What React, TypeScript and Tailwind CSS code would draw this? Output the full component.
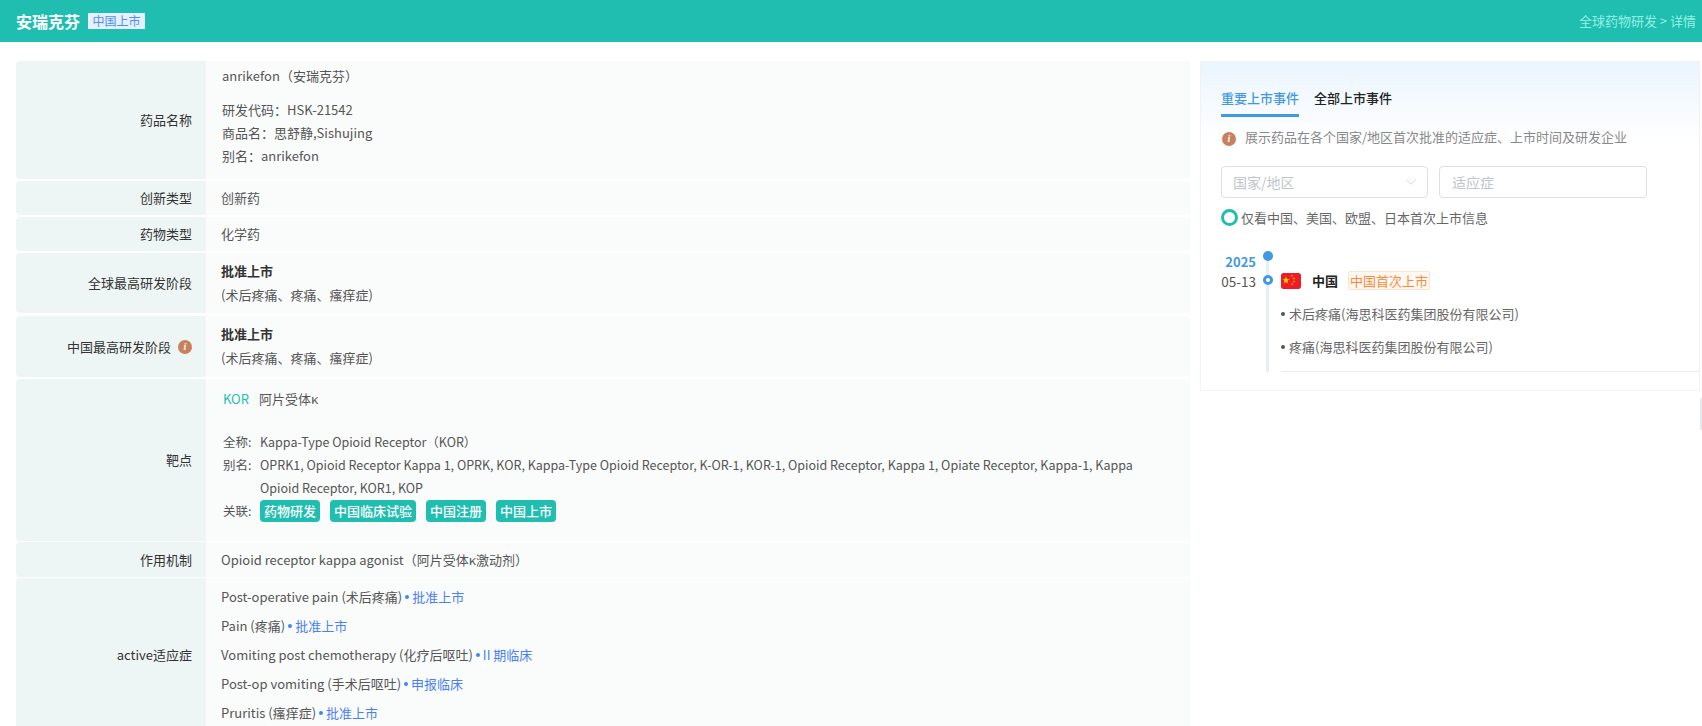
import React from "react";
import { ChevronDown } from "lucide-react";

const font = "[font-family:'Noto_Sans_CJK_SC','Noto_Sans',sans-serif]";

function Info() {
  return (
    <span className="inline-flex h-[14px] w-[14px] shrink-0 items-center justify-center rounded-full bg-[#c9805c] text-[10px] font-bold italic leading-none text-white [font-family:'Liberation_Serif',serif]">
      i
    </span>
  );
}

function Row({
  label,
  labelExtra,
  mb = "mb-[2px]",
  children,
}: {
  label: string;
  labelExtra?: React.ReactNode;
  mb?: string;
  children: React.ReactNode;
}) {
  return (
    <div className={`flex ${mb}`}>
      <div className="flex w-[190px] shrink-0 items-center justify-end gap-[7px] rounded-l-[4px] bg-[#eef6f5] pr-[14px] text-[#333]">
        <span>{label}</span>
        {labelExtra}
      </div>
      <div className="ml-px flex min-w-0 flex-1 flex-col bg-[#fafcfb] text-[#555]">{children}</div>
    </div>
  );
}

function Stage({ h }: { h: string }) {
  return (
    <div className={`flex ${h} flex-col justify-center gap-[3px] pb-[2px] pl-[14px] leading-[21px]`}>
      <div className="font-bold text-[#333]">批准上市</div>
      <div>(术后疼痛、疼痛、瘙痒症)</div>
    </div>
  );
}

const indications: [string, string][] = [
  ["Post-operative pain (术后疼痛)", "批准上市"],
  ["Pain (疼痛)", "批准上市"],
  ["Vomiting post chemotherapy (化疗后呕吐)", "II 期临床"],
  ["Post-op vomiting (手术后呕吐)", "申报临床"],
  ["Pruritis (瘙痒症)", "批准上市"],
];

function Flag() {
  return (
    <svg viewBox="0 0 20 16" className="h-4 w-5 shrink-0 rounded-[2px]">
      <rect width="20" height="16" rx="2" fill="#ee1c25" />
      <polygon points="5,3.5 5.9,6.2 8.6,6.2 6.4,7.8 7.2,10.5 5,8.9 2.8,10.5 3.6,7.8 1.4,6.2 4.1,6.2" fill="#ffde00" />
      <circle cx="11" cy="3" r="0.8" fill="#ffde00" />
      <circle cx="13" cy="5.5" r="0.8" fill="#ffde00" />
      <circle cx="13" cy="8.5" r="0.8" fill="#ffde00" />
      <circle cx="11" cy="11" r="0.8" fill="#ffde00" />
    </svg>
  );
}

export default function App() {
  return (
    <div className={`relative h-[726px] overflow-hidden bg-white text-[13px] ${font}`}>
      <header className="flex h-[42px] items-center justify-between bg-[#1fbeb0] pl-4 pr-[6px]">
        <div className="flex items-center gap-2">
          <span className="text-base font-bold text-white">安瑞克芬</span>
          <span className="flex h-4 w-[57px] items-center justify-center bg-[#e6f0ff] text-xs text-[#4a90f5]">中国上市</span>
        </div>
        <span className="text-[#95f0e4]">全球药物研发 &gt; 详情</span>
      </header>

      <main className="flex items-start pl-4 pt-[19px]">
        <div className="w-[1174px] shrink-0">
          <Row label="药品名称">
            <div className="mb-[2px] flex h-[30px] items-center pl-[15px]">anrikefon（安瑞克芬）</div>
            <div className="flex h-[86px] flex-col pl-[15px] pt-[5px] leading-[23px]">
              <div>研发代码：HSK-21542</div>
              <div>商品名：思舒静,Sishujing</div>
              <div>别名：anrikefon</div>
            </div>
          </Row>
          <Row label="创新类型">
            <div className="flex h-[34px] items-center pl-[14px]">创新药</div>
          </Row>
          <Row label="药物类型">
            <div className="flex h-[34px] items-center pl-[14px]">化学药</div>
          </Row>
          <Row label="全球最高研发阶段" mb="mb-[3px]">
            <Stage h="h-[60px]" />
          </Row>
          <Row label="中国最高研发阶段" labelExtra={<Info />}>
            <Stage h="h-[61px]" />
          </Row>
          <Row label="靶点" mb="mb-px">
            <div className="mb-[2px] flex h-[36px] items-center gap-[10px] pl-[16px] pt-[3px]">
              <span className="text-[#1fbeb0]">KOR</span>
              <span>阿片受体κ</span>
            </div>
            <div className="flex h-[124px] flex-col pl-[16px] pt-[12px] text-[12.5px] leading-[23px]">
              <div className="flex h-[24px] items-end gap-[7px]">
                <span className="w-[30px] shrink-0">全称:</span>
                <span>Kappa-Type Opioid Receptor（KOR）</span>
              </div>
              <div className="flex gap-[7px]">
                <span className="w-[30px] shrink-0">别名:</span>
                <span className="w-[880px]">
                  OPRK1, Opioid Receptor Kappa 1, OPRK, KOR, Kappa-Type Opioid Receptor, K-OR-1, KOR-1, Opioid Receptor, Kappa 1, Opiate Receptor, Kappa-1, Kappa Opioid Receptor, KOR1, KOP
                </span>
              </div>
              <div className="flex items-center gap-[7px]">
                <span className="w-[30px] shrink-0">关联:</span>
                <div className="flex gap-[10px]">
                  {["药物研发", "中国临床试验", "中国注册", "中国上市"].map((t) => (
                    <span key={t} className="flex h-[22px] items-center rounded-[4px] bg-[#1fbeb0] px-[4px] text-[13px] font-medium text-white">
                      {t}
                    </span>
                  ))}
                </div>
              </div>
            </div>
          </Row>
          <Row label="作用机制" mb="mb-px">
            <div className="flex h-[35px] items-center pl-[14px]">Opioid receptor kappa agonist（阿片受体κ激动剂）</div>
          </Row>
          <Row label="active适应症">
            <div className="flex flex-col pb-[5px] pl-[14px] pt-[4px]">
              {indications.map(([name, stage]) => (
                <div key={name} className="flex h-[29px] items-center">
                  <span>{name}</span>
                  <span className="ml-[3px] h-[4px] w-[4px] rounded-full bg-[#3f87f5]" />
                  <span className="ml-[3px] text-[#4a7ff5]">{stage}</span>
                </div>
              ))}
            </div>
          </Row>
        </div>

        <aside className="ml-[10px] h-[330px] w-[500px] shrink-0 border border-[#f0f2f4] bg-gradient-to-b from-[#eaf5fe] to-white to-[80px] pl-5">
          <div className="mt-[26px] flex h-[29px] gap-[15px] font-medium">
            <div className="h-[29px] w-[78px] border-b-[3px] border-[#4299e1] text-[#4299e1]">重要上市事件</div>
            <div className="text-[#222]">全部上市事件</div>
          </div>
          <div className="mt-[10px] flex items-center gap-[9px] text-[#888]">
            <span className="ml-px"><Info /></span>
            <span>展示药品在各个国家/地区首次批准的适应症、上市时间及研发企业</span>
          </div>
          <div className="mt-[19px] flex gap-[11px]">
            <div className="flex h-[32px] w-[207px] items-center justify-between rounded-[4px] border border-[#dcdfe6] pl-[11px] pr-[7px] text-sm text-[#c0c4cc]">
              <span>国家/地区</span>
              <ChevronDown size={18} strokeWidth={1} />
            </div>
            <div className="flex h-[32px] w-[208px] items-center rounded-[4px] border border-[#dcdfe6] pl-3 text-sm text-[#c0c4cc]">适应症</div>
          </div>
          <div className="mt-[11px] flex items-center gap-[3px] text-[#666]">
            <span className="h-[17px] w-[17px] rounded-full border-[3px] border-[#1fbeb0] bg-white" />
            <span className="-mt-px">仅看中国、美国、欧盟、日本首次上市信息</span>
          </div>

          <div className="mt-[24px] flex">
            <div className="flex w-[35px] shrink-0 flex-col items-end pt-px text-right">
              <div className="font-bold leading-[19px] text-[#4299e1]">2025</div>
              <div className="mt-px whitespace-nowrap text-[13.5px] leading-[19px] text-[#555]">05-13</div>
            </div>
            <div className="relative ml-[6px] w-[19px] shrink-0">
              <span className="absolute bottom-0 left-[4px] top-0 w-[3px] bg-[#e6eff8]" />
              <span className="absolute left-[1px] top-0 h-[10px] w-[10px] rounded-full bg-[#4299e1]" />
              <span className="absolute left-[1px] top-[24px] h-[10px] w-[10px] rounded-full border-[3px] border-[#4299e1] bg-white" />
            </div>
            <div className="min-w-0 flex-1">
              <div className="mt-[20px] flex h-[19px] items-center">
                <Flag />
                <span className="ml-[11px] font-bold text-[#222]">中国</span>
                <span className="ml-[10px] flex h-[19px] w-[82px] items-center justify-center rounded-[2px] border border-[#fde3cf] bg-[#fff8f2] text-[#f98a3c]">中国首次上市</span>
              </div>
              <div className="mt-[7px] flex h-[33px] items-center text-[#666]">
                <span className="h-[4px] w-[4px] rounded-full bg-[#555]" />
                <span className="ml-[4px]">术后疼痛(海思科医药集团股份有限公司)</span>
              </div>
              <div className="flex h-[33px] items-center text-[#666]">
                <span className="h-[4px] w-[4px] rounded-full bg-[#555]" />
                <span className="ml-[4px]">疼痛(海思科医药集团股份有限公司)</span>
              </div>
              <div className="mt-[8px] h-px bg-[#e8ebef]" />
            </div>
          </div>
        </aside>
      </main>

      <span className="absolute right-0 top-[398px] h-[32px] w-[2px] rounded-l-[3px] border border-[#e4e7ed] bg-white" />
    </div>
  );
}
